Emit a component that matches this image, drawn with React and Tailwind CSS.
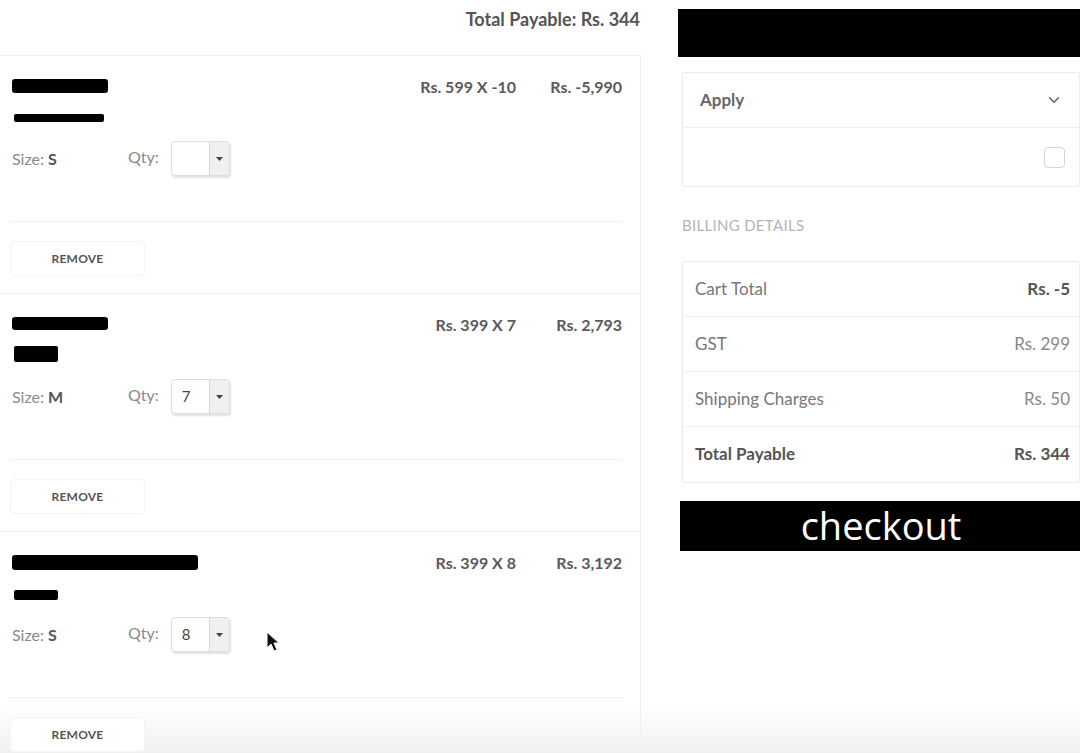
import React from "react";
import { ChevronDown } from "lucide-react";

const items = [
  { nameW: "w-[96px]", nameH: "h-[14px]", subW: "w-[90px]", subH: "h-[8px]", subTop: "mt-[21px]", size: "S", qty: "", unit: "Rs. 599 X -10", total: "Rs. -5,990" },
  { nameW: "w-[96px]", nameH: "h-[13px]", subW: "w-[44px]", subH: "h-[16px]", subTop: "mt-[16px]", size: "M", qty: "7", unit: "Rs. 399 X 7", total: "Rs. 2,793" },
  { nameW: "w-[186px]", nameH: "h-[15px]", subW: "w-[44px]", subH: "h-[10px]", subTop: "mt-[20px]", size: "S", qty: "8", unit: "Rs. 399 X 8", total: "Rs. 3,192" },
];

function QtySelect({ value }) {
  return (
    <div className="flex h-[35px] w-[59px] rounded-[4px] border border-[#dedede] bg-white shadow-[1px_2px_2px_rgba(0,0,0,0.12)] overflow-hidden">
      <div className="flex-1 flex items-center pl-[10px] text-[15px] text-[#444]">{value}</div>
      <div className="w-[20px] border-l border-[#d8d8d8] bg-[#f0f0f0] flex items-center justify-center">
        <svg width="7" height="4" viewBox="0 0 7 4"><path d="M0 0h7L3.5 4z" fill="#444" /></svg>
      </div>
    </div>
  );
}

function CartItem({ item }) {
  return (
    <div className="border-b border-[#f0f0f0] pl-[12px] pr-[18px]">
      <div className="pt-[23px] flex justify-between">
        {/* redacted product name and variant */}
        <div className="h-[44px]">
          <div className={`${item.nameH} ${item.nameW} bg-black rounded-[3px]`} />
          <div className={`${item.subTop} ${item.subH} ${item.subW} ml-[2px] bg-black rounded-[2px]`} />
        </div>
        <div className="flex text-[16px] leading-[20px] font-bold text-[#5a5a5a] -mt-[2px]">
          <span className="text-right">{item.unit}</span>
          <span className="w-[106px] text-right">{item.total}</span>
        </div>
      </div>
      <div className="mt-[18px] flex items-center text-[16px]">
        <span className="w-[116px] text-[#8a8a8a]">
          Size: <b className="text-[#555]">{item.size}</b>
        </span>
        <span className="text-[#8a8a8a] mr-[12px] -mt-[4px]">Qty:</span>
        <QtySelect value={item.qty} />
      </div>
      <div className="mt-[45px] border-t border-[#f0f0f0] -ml-[2px] pt-[19px] pb-[17px]">
        <button className="h-[35px] w-[135px] rounded-[4px] border border-[#f4f4f4] bg-white text-[12px] font-bold text-[#555] tracking-[0.2px]">
          REMOVE
        </button>
      </div>
    </div>
  );
}

function BillRow({ label, value, bold, strongValue }) {
  return (
    <div className="h-[55px] flex items-center justify-between pl-[12px] pr-[9px] border-b border-[#f0f0f0] last:border-b-0 text-[17px]">
      <span className={bold ? "font-bold text-[#555]" : "text-[#777]"}>{label}</span>
      <span className={bold || strongValue ? "font-bold text-[#555]" : "text-[#888]"}>{value}</span>
    </div>
  );
}

export default function App() {
  return (
    <div
      className="relative w-[1080px] h-[753px] overflow-hidden bg-white flex"
      style={{ fontFamily: "Lato, 'Noto Sans', sans-serif" }}
    >
      {/* bottom fade, behind content */}
      <div className="pointer-events-none absolute left-0 right-0 bottom-0 h-[45px] bg-gradient-to-b from-white to-[#f0f0f0]" />

      {/* left column */}
      <div className="relative w-[641px] shrink-0 flex flex-col">
        <div className="h-[55px] shrink-0 flex justify-end pt-[6px] pr-[1px] text-[18px] font-bold text-[#555]">
          Total Payable: Rs. 344
        </div>
        <div className="flex-1 border-t border-r border-[#f0f0f0]">
          {items.map((item, i) => (
            <CartItem key={i} item={item} />
          ))}
        </div>
      </div>

      {/* right column */}
      <div className="relative ml-[37px] w-[402px] shrink-0 pt-[9px]">
        <div className="h-[48px] bg-black" />
        <div className="mt-[15px] ml-[4px] border border-[#ececec] rounded-[2px] bg-white">
          <div className="h-[55px] flex items-center justify-between pl-[17px] pr-[16px] border-b border-[#efefef]">
            <span className="text-[17px] font-bold text-[#666]">Apply</span>
            <ChevronDown className="h-[18px] w-[18px] text-[#666]" strokeWidth={2} />
          </div>
          <div className="h-[58px] flex items-center justify-end pr-[14px]">
            <div className="h-[21px] w-[21px] rounded-[4px] border border-[#d4d4d4] bg-white" />
          </div>
        </div>
        <div className="mt-[27px] ml-[4px] text-[15px] text-[#b5b5b5] tracking-[0.3px]">BILLING DETAILS</div>
        <div className="mt-[24px] ml-[4px] border border-[#ececec] rounded-[2px] bg-white">
          <BillRow label="Cart Total" value="Rs. -5" strongValue />
          <BillRow label="GST" value="Rs. 299" />
          <BillRow label="Shipping Charges" value="Rs. 50" />
          <BillRow label="Total Payable" value="Rs. 344" bold />
        </div>
        <button
          className="mt-[18px] ml-[2px] h-[50px] w-[402px] bg-black text-white text-[38px] leading-none flex items-center justify-center"
          style={{ fontFamily: "'Open Sans', 'Noto Sans', sans-serif" }}
        >
          <span className="-mt-[1px]">checkout</span>
        </button>
      </div>

      {/* mouse cursor */}
      <svg className="absolute left-[266px] top-[631px]" width="14" height="22" viewBox="0 0 14 22">
        <path d="M1 1v16l4-4 3 7 3-1-3-7h5z" fill="#111" stroke="#fff" strokeWidth="1" />
      </svg>
    </div>
  );
}
